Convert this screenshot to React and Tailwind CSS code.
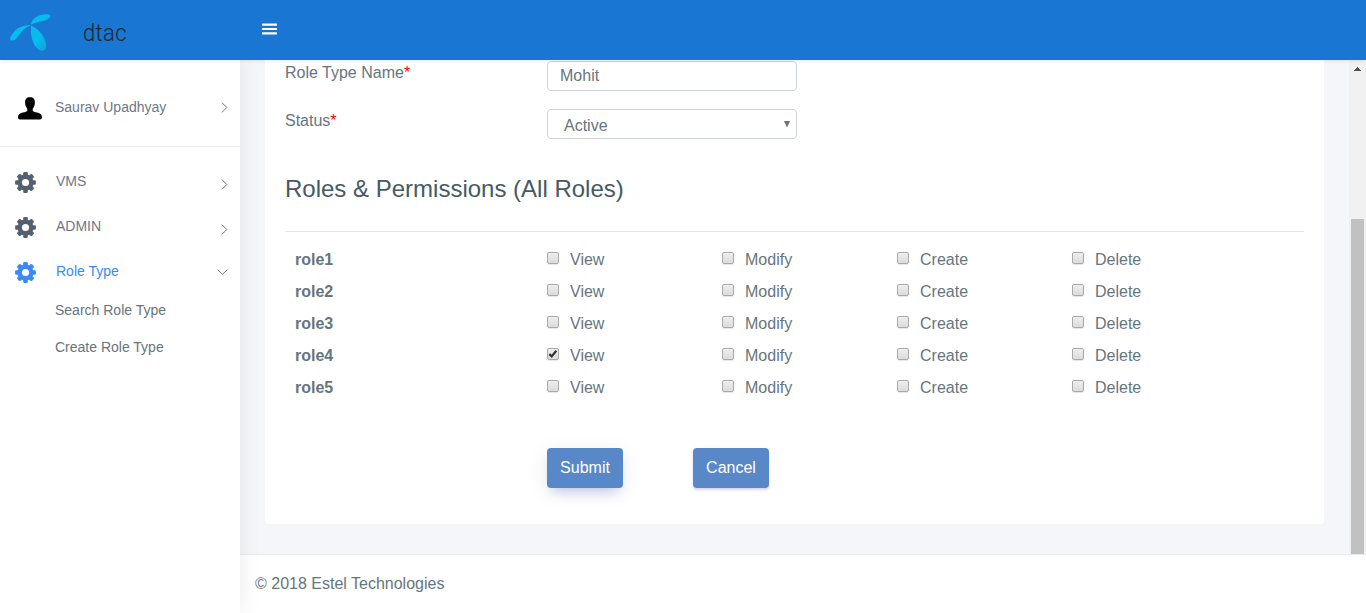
import React from 'react';

const roles = ['role1', 'role2', 'role3', 'role4', 'role5'];
const actions = ['View', 'Modify', 'Create', 'Delete'];

function Logo() {
  return (
    <svg className="h-[37px] w-[41px] shrink-0" viewBox="0 0 41 37">
      <defs>
        <linearGradient id="wing" x1="0" y1="0" x2="1" y2="1">
          <stop offset="0" stopColor="#16b4e2" />
          <stop offset="0.5" stopColor="#00bff2" />
          <stop offset="1" stopColor="#169fcf" />
        </linearGradient>
      </defs>
      <path fill="url(#wing)" d="M21 10.500C22 4 29 .2 37 .3c4 .2 4.300 3 1 4.700C33 7.800 26 8 21 10.500z" />
      <path fill="url(#wing)" d="M21 11.500c-5-.8-12 1-16 5.300-3 3.200-5.800 8-4.500 9.200 1.300 1.300 4.300.4 6-1.600C10.500 19.500 13 13.500 21 11.500z" />
      <path fill="url(#wing)" d="M21.200 11.500c7 3 15.300 12.500 15 21-.2 4-3.500 5-6.700 3.500C22.500 32.500 19.800 20 21.200 11.500z" />
    </svg>
  );
}

function Gear({ className }) {
  return (
    <svg className={'size-[21px] shrink-0 ' + className} viewBox="-10.500 -10.500 21 21" fill="currentColor">
      {[0, 45, 90, 135].map((angle) => (
        <rect key={angle} x="-2.300" y="-10.400" width="4.600" height="20.800" rx="1.200" transform={`rotate(${angle})`} />
      ))}
      <circle r="8" />
      <circle r="3.600" fill="#fff" />
    </svg>
  );
}

function Chevron({ down = false }) {
  return down ? (
    <svg className="h-[6px] w-[11px]" viewBox="0 0 11 6" fill="none" stroke="#67757c" strokeWidth="1">
      <path d="M.7.700 5.500 5.300 10.300.7" />
    </svg>
  ) : (
    <svg className="h-[11px] w-[7px]" viewBox="0 0 7 11" fill="none" stroke="#67757c" strokeWidth="1">
      <path d="M1 .7 5.800 5.500 1 10.300" />
    </svg>
  );
}

function MenuItem({ label, active = false }) {
  return (
    <li className={'flex h-[45px] items-center pl-[15px] pr-3 ' + (active ? 'text-[#398bf7]' : 'text-[#6f7787]')}>
      <Gear className={active ? 'text-[#398bf7]' : 'text-[#54606f]'} />
      <span className="-mt-1 ml-5 flex-1">{label}</span>
      <span className={active ? '-mt-px' : 'mt-1'}><Chevron down={active} /></span>
    </li>
  );
}

function Check({ label, checked }) {
  return (
    <label className="flex h-8 w-[175px] items-center">
      <span className="-mt-1 flex size-3 items-center justify-center rounded-[2px] border border-[#a9a9a9] bg-linear-to-b from-[#eeeeee] to-[#dcdcdc] shadow-[0_1px_1px_rgba(0,0,0,0.1)]">
        {checked && (
          <svg className="size-[10px] shrink-0" viewBox="0 0 10 10" fill="none" stroke="#333" strokeWidth="2.200">
            <path d="M1.300 5.100 3.700 7.400 8.300 1.700" />
          </svg>
        )}
      </span>
      <span className="ml-[11px]">{label}</span>
    </label>
  );
}

export default function App() {
  return (
    <div className="flex h-[613px] w-[1366px] flex-col overflow-hidden bg-[#f4f6f9] font-['Liberation_Sans',Arial,sans-serif] text-base leading-6 text-[#67757c]">
      <header className="z-20 flex h-[60px] shrink-0 items-center bg-[#1976d2] shadow-[0_0_5px_rgba(0,0,0,0.12)]">
        <div className="flex w-60 items-center pl-[10px]">
          <span className="mt-[4px]"><Logo /></span>
          <span className="ml-8 mt-[5px] origin-left scale-x-[0.915] font-['Roboto',sans-serif] text-2xl font-light tracking-[0.4px] text-[#212529]">dtac</span>
        </div>
        <svg className="-mt-[2px] ml-[22px] h-[12px] w-[15px]" viewBox="0 0 15 12" fill="#fff">
          <rect y="0.400" width="15" height="2.300" rx="0.500" />
          <rect y="4.900" width="15" height="2.200" rx="0.500" />
          <rect y="9.300" width="15" height="2.300" rx="0.500" />
        </svg>
      </header>

      <div className="flex min-h-0 flex-1">
        <aside className="z-10 w-60 shrink-0 bg-white text-sm shadow-[1px_0_20px_rgba(0,0,0,0.08)]">
          <div className="flex h-[87px] items-center border-b border-[#e9ecef] pl-[18px] pr-3 pt-[9px] text-[#6f7787]">
            <svg className="h-6 w-6" viewBox="0 0 24 24" fill="#000">
              <path d="M12 1.200c3.600 0 4.900 2 4.900 5 0 2.700-.8 5.200-2.200 6.500v2c.3.900 2 1.200 4.500 1.900 3.200.9 4.800 2.200 4.800 4.500 0 1.700-.6 2.400-2 2.400H2c-1.400 0-2-.7-2-2.400 0-2.300 1.600-3.600 4.800-4.500 2.500-.7 4.200-1 4.500-1.900v-2C7.900 11.400 7.100 8.900 7.100 6.200c0-3 1.300-5 4.900-5z" />
            </svg>
            <span className="-mt-[2px] ml-[13px] flex-1">Saurav Upadhyay</span>
            <Chevron />
          </div>
          <ul className="pt-[13px]">
            <MenuItem label="VMS" />
            <MenuItem label="ADMIN" />
            <MenuItem label="Role Type" active />
            <li className="-mt-1 flex h-[37px] items-center pl-[55px]">Search Role Type</li>
            <li className="flex h-[37px] items-center pl-[55px]">Create Role Type</li>
          </ul>
        </aside>

        <main className="flex min-w-0 flex-1 flex-col">
          <div className="flex h-[494px] shrink-0">
            <div className="flex-1 px-[25px]">
              <section className="h-[464px] rounded-b-[4px] bg-white px-5 pt-px">
                <div className="flex h-12">
                  <label className="w-[262px]">Role Type Name<span className="text-[#f00]">*</span></label>
                  <div className="flex h-[30px] w-[250px] items-center rounded-[4px] border border-[#ced4da] px-3">Mohit</div>
                </div>
                <div className="flex h-12">
                  <label className="w-[262px]">Status<span className="text-[#f00]">*</span></label>
                  <div className="flex h-[30px] w-[250px] items-center justify-between rounded-[4px] border border-[#ced4da] pl-4 pr-[6px]">
                    <span className="mt-[3px]">Active</span>
                    <svg className="h-[6px] w-[6px]" viewBox="0 0 6 6" fill="#67757c"><path d="M0 0h6L3.300 6h-.6z" /></svg>
                  </div>
                </div>
                <h3 className="flex h-[75px] items-start border-b border-[#e5e5e5] pt-[14px] text-2xl leading-9 text-[#455a64]">Roles &amp; Permissions (All Roles)</h3>
                <div className="pt-3">
                  {roles.map((role) => (
                    <div key={role} className="flex h-8 items-center">
                      <b className="w-[262px] pl-[10px]">{role}</b>
                      {actions.map((action) => (
                        <Check key={action} label={action} checked={role === 'role4' && action === 'View'} />
                      ))}
                    </div>
                  ))}
                </div>
                <div className="flex gap-[70px] pl-[262px] pt-11 text-white">
                  <button className="h-10 w-[76px] rounded-[4px] bg-[#5888c8] shadow-[0_8px_12px_-5px_rgba(88,110,210,0.35),0_4px_23px_0_rgba(0,0,0,0.07)]">Submit</button>
                  <button className="h-10 w-[76px] rounded-[4px] bg-[#5888c8] shadow-[0_2px_2px_0_rgba(116,96,238,0.2),0_1px_5px_0_rgba(116,96,238,0.1)]">Cancel</button>
                </div>
              </section>
            </div>
            <div className="flex w-[17px] flex-col items-center justify-between bg-[#f1f1f1] pt-[7px]">
              <svg className="h-1 w-[7px]" viewBox="0 0 7 4" fill="#505050" shapeRendering="crispEdges"><path d="M3 0h1v1h1v1h1v1h1v1H0V3h1V2h1V1h1z" /></svg>
              <div className="h-[335px] w-[13px] bg-[#c1c1c1]" />
            </div>
          </div>
          <footer className="flex flex-1 items-center border-t border-[#e9ebee] bg-white px-[15px]">© 2018 Estel Technologies</footer>
        </main>
      </div>
    </div>
  );
}
